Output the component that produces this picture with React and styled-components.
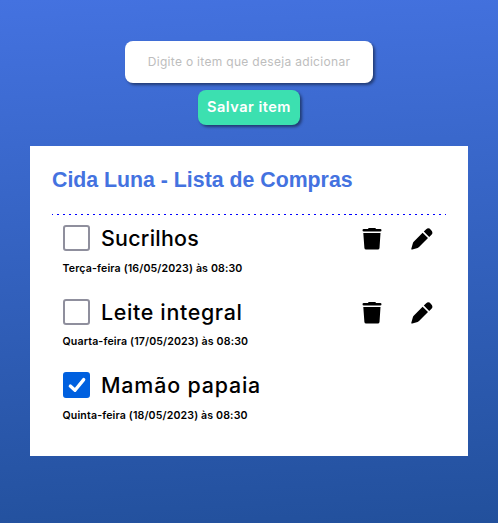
import React, { useState } from "react";
import styled, { createGlobalStyle } from "styled-components";

const GlobalStyle = createGlobalStyle`
  * { box-sizing: border-box; }
  body { margin: 0; font-family: Inter, "Open Sans", sans-serif; }
`;

const Page = styled.main`
  min-height: 523px;
  height: 100vh;
  padding: 41px 30px 0;
  display: flex;
  flex-direction: column;
  align-items: center;
  background: linear-gradient(177deg, #4472e0 0%, #22509c 100%);
`;

const Form = styled.form`
  display: flex;
  flex-direction: column;
  align-items: center;
  gap: 7px;
  margin-bottom: 21px;
`;

const ItemInput = styled.input`
  width: 248px;
  height: 42px;
  padding: 0 0 1px;
  border: 0;
  border-radius: 8px;
  background: #fff;
  box-shadow: 2px 2px 3px rgba(0, 0, 0, 0.45);
  font: 400 12px Inter, sans-serif;
  letter-spacing: 0.31px;
  text-align: center;
  &::placeholder { color: #bdbdbd; opacity: 1; }
`;

const SaveButton = styled.button`
  width: 102px;
  height: 35px;
  padding: 0 0 2px;
  border: 0;
  border-radius: 8px;
  background: #3ce0b0;
  box-shadow: 2px 2px 3px rgba(0, 0, 0, 0.45);
  color: #fff;
  font: 600 14.6px Inter, sans-serif;
  letter-spacing: 0.48px;
  white-space: nowrap;
`;

const Card = styled.section`
  width: 438px;
  height: 310px;
  padding: 22px 22px 0;
  background: #fff;
`;

const Title = styled.h1`
  margin: 0;
  height: 46px;
  color: #4472e0;
  font: 700 21.3px/24px "Liberation Sans", Arial, sans-serif;
  white-space: nowrap;
`;

const Divider = styled.div`
  height: 1px;
  background: repeating-linear-gradient(90deg, #0000ff 0 1px, transparent 1px 4.95px, #0000ff 4.95px 5.97px);
`;

const List = styled.ul`
  margin: 0;
  padding: 10px 11px 0;
  list-style: none;
`;

const Item = styled.li`
  height: 73.5px;
`;

const ItemRow = styled.div`
  display: flex;
  align-items: flex-start;
  height: 27px;
`;

const CheckBox = styled.button`
  flex: none;
  width: 27px;
  height: 26px;
  padding: 0;
  display: grid;
  place-items: center;
  border: 2px solid ${({ $on }) => ($on ? "#0060df" : "#8f8f9d")};
  border-radius: 3px;
  background: ${({ $on }) => ($on ? "#0060df" : "#fff")};
`;

const Name = styled.span`
  margin-left: 11px;
  font-size: 21.4px;
  font-weight: 500;
  line-height: 27px;
  letter-spacing: ${({ $track }) => $track}px;
  white-space: nowrap;
`;

const Actions = styled.div`
  margin-left: auto;
  display: flex;
  gap: 29px;
  padding: 3px 2px 0 0;
`;

const IconButton = styled.button`
  padding: 0;
  border: 0;
  background: none;
  color: #000;
  display: flex;
`;

const DateLine = styled.p`
  margin: 9.8px 0 0 -0.5px;
  font-size: 10.6px;
  font-weight: 600;
  line-height: 14px;
  letter-spacing: 0.14px;
  white-space: nowrap;
`;

const initialItems = [
  { name: "Sucrilhos", date: "Terça-feira (16/05/2023) às 08:30", done: false, track: 0.27 },
  { name: "Leite integral", date: "Quarta-feira (17/05/2023) às 08:30", done: false, track: 0.66 },
  { name: "Mamão papaia", date: "Quinta-feira (18/05/2023) às 08:30", done: true, track: 0.83 },
];

function Tick() {
  return (
    <svg width="22" height="22" viewBox="0 0 22 22" fill="none">
      <path d="M4.3 12 9 16.3 17.7 5.6" stroke="#fff" strokeWidth="3.3" strokeLinecap="round" strokeLinejoin="round" />
    </svg>
  );
}

function TrashIcon() {
  return (
    <svg width="20" height="22" viewBox="0 0 20 22" fill="currentColor">
      <path d="M7 0h6q.8 0 1 1.1h4.2q1.3 0 1.3 1.2t-1.3 1.2H1.8Q.5 3.5 .5 2.3T1.8 1.1H6Q6.2 0 7 0Z" />
      <path d="M1.3 5h17.2l-1 14.9q-.1 1.7-1.8 1.7H4.2q-1.7 0-1.8-1.7Z" />
    </svg>
  );
}

function PencilIcon() {
  return (
    <svg width="22" height="22" viewBox="0 0 22 22" fill="currentColor">
      <path d="M11.6 4.7 17 10.1 8 19Q7.4 19.600 6.600 19.900L1.300 21.500Q.1 21.800 .3 20.700L1.800 15.400Q2 14.500 2.700 13.700Z" />
      <path d="M12.800 3.500 15.200 1.200Q17.500-.7 19.800 1.700 22.500 4.200 20.700 6.500L18.200 8.900Z" />
    </svg>
  );
}

export default function App() {
  const [items, setItems] = useState(initialItems);
  const toggle = (index) =>
    setItems(items.map((it, i) => (i === index ? { ...it, done: !it.done } : it)));
  return (
    <>
      <GlobalStyle />
      <Page>
        <Form onSubmit={(e) => e.preventDefault()}>
          <ItemInput placeholder="Digite o item que deseja adicionar" />
          <SaveButton>Salvar item</SaveButton>
        </Form>
        <Card>
          <Title>Cida Luna - Lista de Compras</Title>
          <Divider />
          <List>
            {items.map((it, i) => (
              <Item key={it.name}>
                <ItemRow>
                  <CheckBox type="button" role="checkbox" aria-checked={it.done} $on={it.done} onClick={() => toggle(i)}>
                    {it.done && <Tick />}
                  </CheckBox>
                  <Name $track={it.track}>{it.name}</Name>
                  {!it.done && (
                    <Actions>
                      <IconButton aria-label="Excluir"><TrashIcon /></IconButton>
                      <IconButton aria-label="Editar"><PencilIcon /></IconButton>
                    </Actions>
                  )}
                </ItemRow>
                <DateLine>{it.date}</DateLine>
              </Item>
            ))}
          </List>
        </Card>
      </Page>
    </>
  );
}
